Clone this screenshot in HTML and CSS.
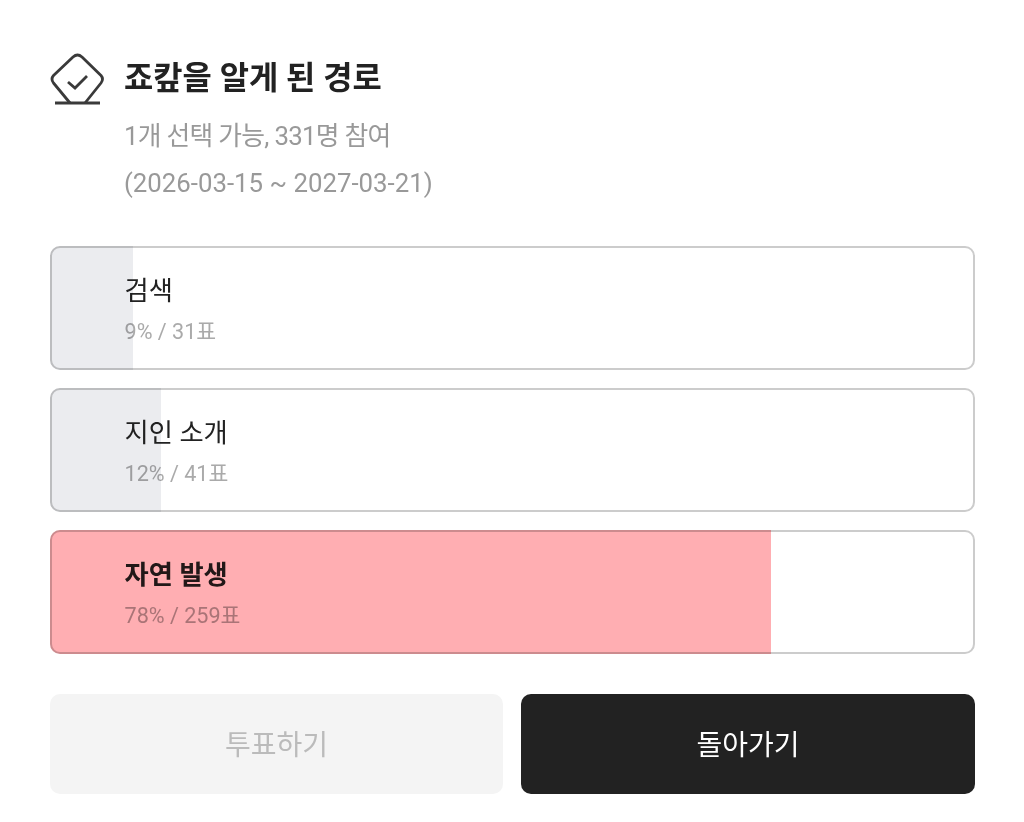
FILE: index.html
```html
<!DOCTYPE html>
<html lang="ko">
<head>
    <meta charset="UTF-8">
    <meta name="viewport" content="width=device-width, initial-scale=1.0">
    <title>투표</title>
    <link rel="stylesheet" href="styles.css">
</head>
<body>
    <div class="poll">
        <div class="poll-head">
            <svg class="poll-icon" viewBox="0 0 54 54" fill="none" stroke="#3a3a3a" stroke-width="2.8">
                <path d="M20 51 L3.5 31 Q0.5 27 3.5 23.5 L23 5 Q27.5 1 32 5 L51 23.5 Q54 27 51 31 L35 51" stroke-linejoin="round"/>
                <path d="M5 51 H50"/>
                <path d="M18 30 L25 36 L37 24"/>
            </svg>
            <div class="poll-info">
                <h1 class="poll-title">죠캎을 알게 된 경로</h1>
                <div class="poll-meta tight">1개 선택 가능, 331명 참여</div>
                <div class="poll-meta">(2026-03-15 ~ 2027-03-21)</div>
            </div>
        </div>
        <div class="options">
            <div class="option">
                <div class="option-track"><div class="option-fill" style="width: 9%"></div></div>
                <div class="option-label">검색</div>
                <div class="option-count">9% / 31표</div>
            </div>
            <div class="option">
                <div class="option-track"><div class="option-fill" style="width: 12%"></div></div>
                <div class="option-label">지인 소개</div>
                <div class="option-count">12% / 41표</div>
            </div>
            <div class="option selected">
                <div class="option-track"><div class="option-fill" style="width: 77.9%"></div></div>
                <div class="option-label">자연 발생</div>
                <div class="option-count">78% / 259표</div>
            </div>
        </div>
        <div class="actions">
            <div class="btn disabled">투표하기</div>
            <div class="btn dark">돌아가기</div>
        </div>
    </div>
</body>
</html>
```

FILE: styles.css
```css
body {
    margin: 0;
    background: #fff;
    font-family: Roboto, "Noto Sans CJK KR", sans-serif;
}
.poll {
    padding: 52px 49px 28px 50px;
}
.poll-head {
    display: flex;
    gap: 20px;
}
.poll-icon {
    width: 54px;
    height: 54px;
    flex-shrink: 0;
}
.poll-title {
    margin: 0 0 9px;
    font-size: 31.8px;
    line-height: 52px;
    font-weight: 700;
    color: #222;
}
.poll-meta {
    font-size: 25.8px;
    line-height: 47px;
    color: #999;
}
.poll-meta.tight {
    letter-spacing: -0.7px;
}
.options {
    display: flex;
    flex-direction: column;
    gap: 18px;
    margin-top: 39px;
}
.option {
    position: relative;
    box-sizing: border-box;
    height: 124px;
    padding: 23px 72.5px;
    border: 2px solid #ccc;
    border-radius: 10px;
}
.option-track {
    position: absolute;
    top: -2px;
    left: -2px;
    right: -2px;
    bottom: -2px;
    border-radius: 10px;
    overflow: hidden;
    mix-blend-mode: multiply;
}
.option-fill {
    height: 100%;
    background: #ebecef;
}
.option.selected .option-fill {
    background: #ffaeb2;
}
.option-label {
    font-size: 26.3px;
    line-height: 40px;
    color: #222;
}
.selected .option-label {
    font-weight: 700;
}
.option-count {
    margin-top: 5px;
    font-size: 21.6px;
    line-height: 32px;
    color: #aaa;
}
.actions {
    display: grid;
    grid-template-columns: 453px 1fr;
    gap: 18px;
    margin-top: 40px;
}
.btn {
    box-sizing: border-box;
    height: 100px;
    padding-bottom: 2px;
    border-radius: 10px;
    display: flex;
    align-items: center;
    justify-content: center;
    font-size: 28px;
}
.btn.disabled {
    background: #f4f4f4;
    color: #bbb;
}
.btn.dark {
    background: #222;
    color: #fff;
}
```
